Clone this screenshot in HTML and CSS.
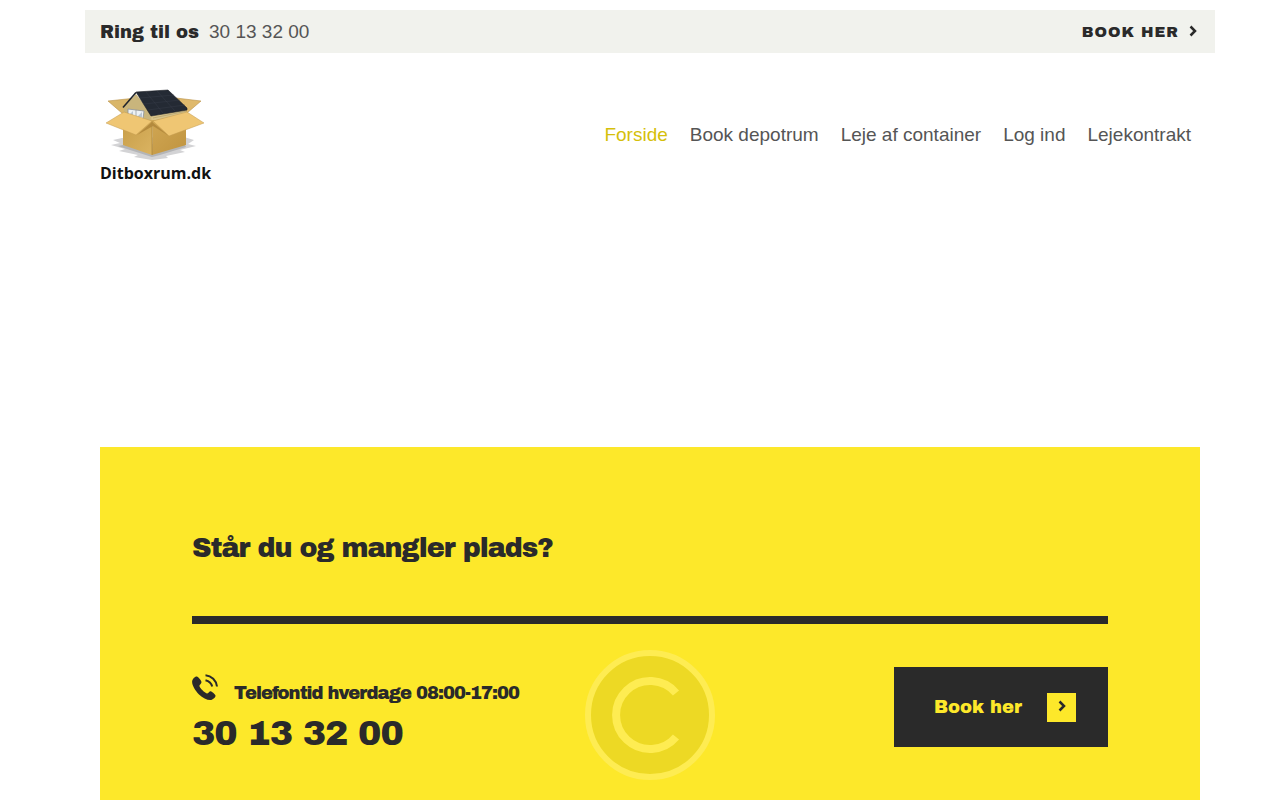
FILE: index.html
```html
<!DOCTYPE html>
<html lang="da">
<head>
    <meta charset="UTF-8">
    <meta name="viewport" content="width=device-width, initial-scale=1.0">
    <title>Ditboxrum.dk</title>
    <link rel="stylesheet" href="styles.css">
</head>
<body>

    <div class="page">
        <div class="top-bar">
            <div class="top-phone">
                <strong>Ring til os</strong>
                <a href="tel:30133200">30 13 32 00</a>
            </div>
            <a class="top-book" href="#book">BOOK HER
                <svg class="arrow" viewBox="0 0 8 12" aria-hidden="true"><path d="M1.5 0.500 6 5 1.5 9.500"/></svg>
            </a>
        </div>

        <header class="header">
            <a class="logo" href="#">
                <svg class="logo-box" viewBox="0 0 110 74" aria-hidden="true">
                    <defs>
                        <linearGradient id="front" x1="0" y1="0" x2="1" y2="1">
                            <stop offset="0" stop-color="#c79d48"/>
                            <stop offset="1" stop-color="#dbb462"/>
                        </linearGradient>
                        <linearGradient id="side" x1="0" y1="0" x2="1" y2="1">
                            <stop offset="0" stop-color="#d0a653"/>
                            <stop offset="1" stop-color="#c0943f"/>
                        </linearGradient>
                    </defs>
                    <!-- shadow -->
                    <path fill="#d3d3d5" d="M22 49 13 51 20 54 11 56 25 60 19 62 38 66 34 68 52 71 68 69 66 67 85 63 80 61 96 57 88 55 94 51 84 48z"/>
                    <path fill="#b4b5b7" d="M23 56 18 57 30 61 52 68 60 66 86 58 84 54z"/>
                    <!-- back flaps -->
                    <path fill="#d9b669" stroke="#b99147" stroke-width=".6" d="M8 12 36 9 28 24 23 25z"/>
                    <path fill="#dfb96c" stroke="#b99147" stroke-width=".6" d="M76 9 101 12 87 24z"/>
                    <!-- house -->
                    <path fill="#c9b57c" d="M24 18 36 5 53 27 53 36 24 30z"/>
                    <path fill="#d8c48a" d="M51 27 86 20 87 28 52 36z"/>
                    <path fill="none" stroke="#a08e5e" stroke-width=".5" d="M53 29 87 22M53 32 87 25"/>
                    <path fill="#edf1f4" stroke="#8b9299" stroke-width=".8" d="M28 20 44 22 43 30 28 27z"/>
                    <path fill="none" stroke="#8b9299" stroke-width=".7" d="M36 21v8"/>
                    <path fill="#b8c5d1" d="M29 26 33 22 33 27zM37 28 42 23 42 28z"/>
                    <path fill="#242a34" stroke="#171b22" stroke-width=".6" d="M36 3 68 1 87 19 87 21 51 27z"/>
                    <path fill="none" stroke="#1f242c" stroke-width="1.600" d="M36 3.500 23 18.500"/>
                    <path fill="none" stroke="#39404c" stroke-width=".4" d="M40 9 74 6M44 15 80 11M48 21 85 16M46 3 63 24M57 2 75 22"/>
                    <!-- carton -->
                    <path fill="url(#front)" d="M23 34 53 31 52 66 23 56z"/>
                    <path fill="url(#side)" d="M53 31 86 33 86 56 52 66z"/>
                    <path fill="none" stroke="#a37a2d" stroke-width=".6" d="M52 32v34"/>
                    <!-- front flaps -->
                    <path fill="#b48a3d" d="M37 46 52 33 69 47 53 37z"/>
                    <path fill="#efc673" stroke="#c39a4e" stroke-width=".5" d="M24 23 52 32 36 46 6 34z"/>
                    <path fill="#efc673" stroke="#c39a4e" stroke-width=".5" d="M53 32 87 23 104 34 69 47z"/>
                </svg>
                <span>Ditboxrum.dk</span>
            </a>
            <nav class="menu">
                <a class="active" href="#">Forside</a>
                <a href="#depotrum">Book depotrum</a>
                <a href="#container">Leje af container</a>
                <a href="#login">Log ind</a>
                <a href="#lejekontrakt">Lejekontrakt</a>
            </nav>
        </header>

        <section class="cta">
            <h2>Står du og mangler plads?</h2>
            <div class="cta-row">
                <div class="contact">
                    <div class="hours">
                        <svg class="phone-icon" viewBox="0 0 26 26" aria-hidden="true">
                            <path fill="currentColor" d="M4.8 2.6C3.1 2.4.2 5 .1 7.8c0 3.500 3 9 6.900 12.600 3.800 3.500 8.700 6 12.100 5.500 2.300-.4 5-3 4.300-4.700-.5-1-3.200-3.500-4.500-4-1.400-.5-2.700 2.300-4 2.200-2.200-.4-7-5.100-7.500-7.300-.2-1.500 2.500-2.800 2-4.300C9 6.400 6.500 2.900 4.800 2.600z"/>
                            <path class="wave" d="M13.500 1.200C19.500 1.700 24.300 6.500 25 12.500"/>
                            <path class="wave" d="M13.500 6.200C17 7 19.400 9.300 20.200 12.600"/>
                        </svg>
                        <span>Telefontid hverdage 08:00-17:00</span>
                    </div>
                    <a class="number" href="tel:30133200">30 13 32 00</a>
                </div>
                <svg class="seal" viewBox="0 0 130 130" aria-hidden="true">
                    <circle cx="65" cy="65" r="62" fill="#edd924" stroke="#feec52" stroke-width="6"/>
                    <path fill="none" stroke="#feec52" stroke-width="8" d="M91 43A34 34 0 1 0 91 87"/>
                </svg>
                <a class="book" href="#book">Book her
                    <span class="book-arrow">
                        <svg class="arrow" viewBox="0 0 8 12" aria-hidden="true"><path d="M1.5 0.500 6 5 1.5 9.500"/></svg>
                    </span>
                </a>
            </div>
        </section>
    </div>

</body>
</html>
```
FILE: styles.css
```css
* {
    box-sizing: border-box;
}

body {
    margin: 0;
    padding: 10px 0 0 20px;
    background-color: #fff;
    color: #555;
    font-family: "Liberation Sans", Arial, sans-serif;
    font-size: 19px;
}

a {
    color: inherit;
    text-decoration: none;
}

.page {
    max-width: 1130px;
    margin: 0 auto;
}

.top-bar {
    display: flex;
    justify-content: space-between;
    align-items: center;
    padding: 10px 18px 9px 15px;
    background-color: #f1f2ed;
    line-height: 23px;
}

.top-phone {
    display: flex;
    align-items: baseline;
    gap: 10px;
}

strong,
.top-book,
.cta {
    color: #2a2a2a;
}

strong,
.top-book,
.cta,
.cta h2 {
    font-family: "Archivo Black", Inter, sans-serif;
    font-weight: 400;
}

strong {
    font-size: 18px;
}

.top-book {
    display: flex;
    align-items: center;
    gap: 10px;
    font-size: 15px;
    letter-spacing: 1px;
}

.arrow {
    width: 8px;
    height: 12px;
    fill: none;
    stroke: #2a2a2a;
    stroke-width: 2.5;
    overflow: visible;
}

.header {
    display: flex;
    justify-content: space-between;
    align-items: center;
    padding: 36px 24px 0 15px;
}

.logo {
    display: flex;
    flex-direction: column;
    color: #111;
    font-family: "Open Sans", sans-serif;
    font-size: 16px;
    font-weight: 700;
    line-height: 20px;
}

.logo-box {
    width: 110px;
    height: 74px;
}

.menu {
    display: flex;
    gap: 22px;
    padding-bottom: 2px;
}

.menu .active {
    color: #d5bf0b;
}

.cta {
    margin: 264px 15px 0;
    padding: 80px 92px;
    background-color: #fde82a;
}

.cta h2 {
    margin: 0;
    padding-bottom: 46px;
    border-bottom: 8px solid #2a2a2a;
    font-size: 27px;
    line-height: 43px;
}

.cta h2,
.contact {
    letter-spacing: -1px;
}

.cta-row {
    display: grid;
    grid-template-columns: 1fr auto 1fr;
    align-items: center;
    padding-top: 26px;
}

.contact {
    padding-bottom: 2px;
}

.book {
    margin-bottom: 16px;
}

.hours {
    display: flex;
    gap: 16px;
    font-size: 18px;
    line-height: 38px;
    white-space: nowrap;
}

.phone-icon {
    width: 26px;
    height: 26px;
}

.wave {
    fill: none;
    stroke: currentColor;
    stroke-width: 2;
}

.number {
    font-size: 35px;
    line-height: 42px;
}

.seal {
    width: 130px;
    height: 130px;
}

.book {
    display: flex;
    justify-self: end;
    align-items: center;
    gap: 25px;
    height: 80px;
    padding: 0 32px 0 40px;
    background-color: #2a2a2a;
    color: #fde82a;
    font-size: 18px;
}

.book-arrow {
    display: flex;
    justify-content: center;
    align-items: center;
    width: 29px;
    height: 29px;
    background-color: #fde82a;
}
```
